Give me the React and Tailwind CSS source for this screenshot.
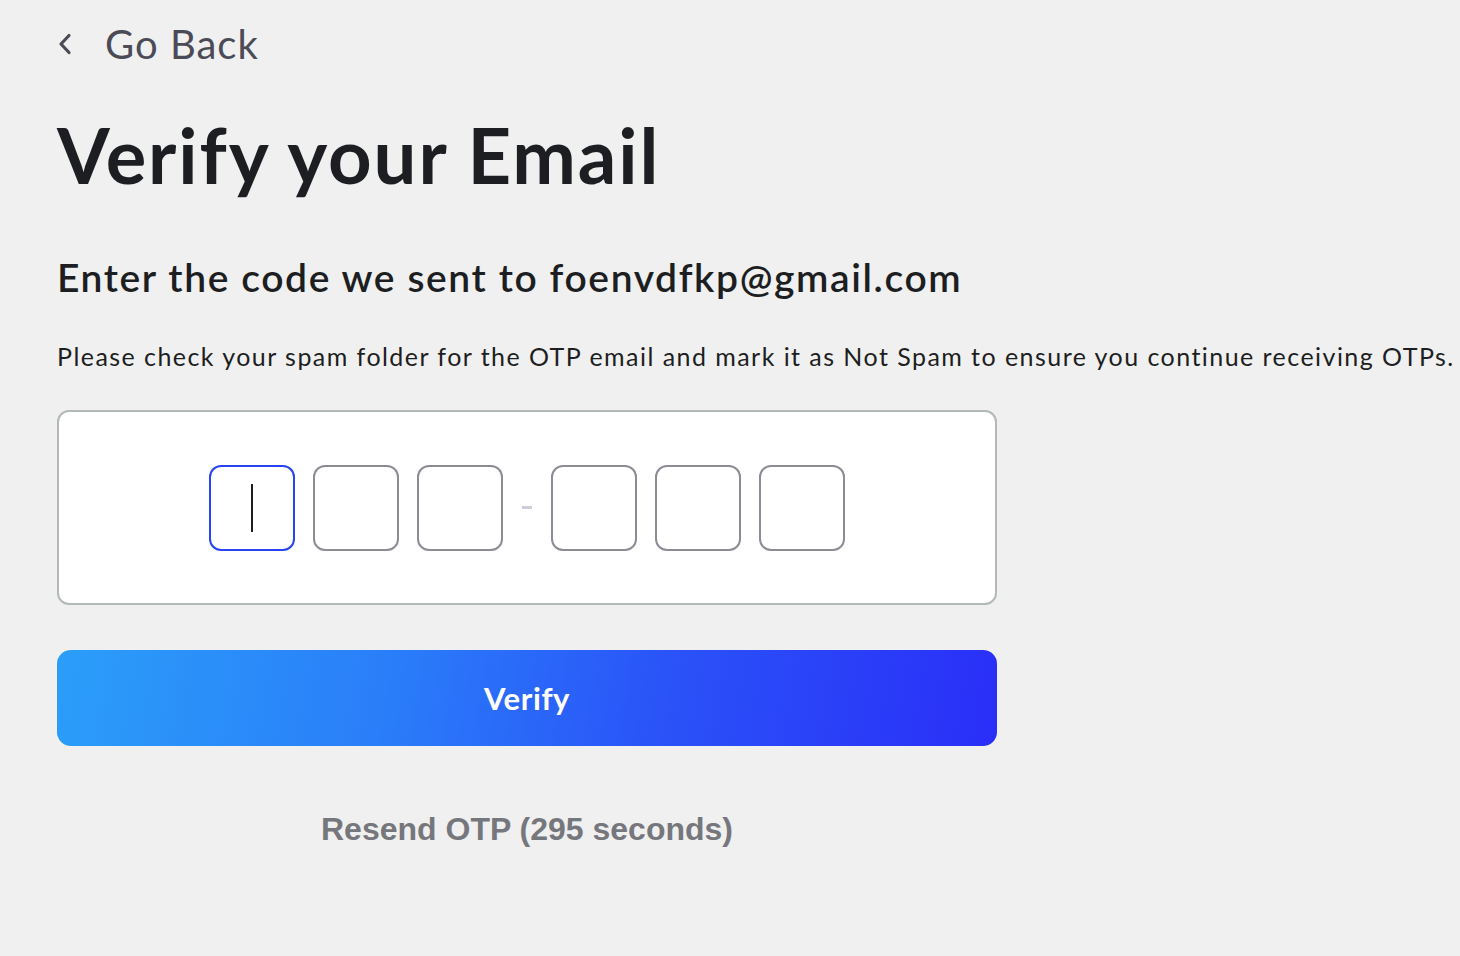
import React from 'react';

function OtpBox({ active }) {
  return (
    <div
      className={
        'w-[86px] h-[86px] rounded-[12px] border-2 bg-white flex items-center justify-center ' +
        (active ? 'border-[#2845f5]' : 'border-[#8b8c95]')
      }
    >
      {active && <div className="w-[2px] h-[48px] bg-[#1d1e22]" />}
    </div>
  );
}

export default function App() {
  return (
    <div className="min-h-[956px] bg-[#eff0ef] pl-[57px] pt-[22px] font-['Lato',sans-serif] text-[#1d1e22]">
      <button className="flex items-center h-[44px] text-[#4b4b57]">
        <svg width="16" height="24" viewBox="0 0 16 24" fill="none" className="mr-[32px]">
          <path d="M12 3.5 L4 12 L12 20.5" stroke="currentColor" strokeWidth="3.2" strokeLinecap="round" strokeLinejoin="round" />
        </svg>
        <span className="text-[40px] leading-none tracking-[1px]">Go Back</span>
      </button>

      <h1 className="mt-[51px] text-[76px] font-bold leading-none tracking-[1.9px]">Verify your Email</h1>

      <h2 className="mt-[65px] text-[39px] font-semibold leading-none tracking-[1.6px]">
        Enter the code we sent to foenvdfkp@gmail.com
      </h2>

      <p className="mt-[47px] text-[25px] leading-none whitespace-nowrap tracking-[1.45px]">
        Please check your spam folder for the OTP email and mark it as Not Spam to ensure you continue receiving OTPs.
      </p>

      <div className="w-[940px]">
        <div className="mt-[41px] h-[195px] bg-white border-2 border-[#b3b8b9] rounded-[12px] flex items-center justify-center">
          <div className="flex items-center gap-[18px]">
            <OtpBox active />
            <OtpBox />
            <OtpBox />
          </div>
          <div className="w-[10px] h-[3px] bg-[#cdcdd8] mx-[19px]" />
          <div className="flex items-center gap-[18px]">
            <OtpBox />
            <OtpBox />
            <OtpBox />
          </div>
        </div>

        <button className="mt-[45px] w-full h-[96px] rounded-[14px] bg-[linear-gradient(100deg,#2b9ef9_0%,#2a7ef9_35%,#2a52f8_65%,#2a2ef8_100%)] text-white text-[31px] font-bold tracking-[0.6px]">
          Verify
        </button>

        <div className="mt-[59px] text-center text-[32px] font-bold text-[#76777d] font-['Liberation_Sans',Arial,sans-serif]">
          Resend OTP (295 seconds)
        </div>
      </div>
    </div>
  );
}
